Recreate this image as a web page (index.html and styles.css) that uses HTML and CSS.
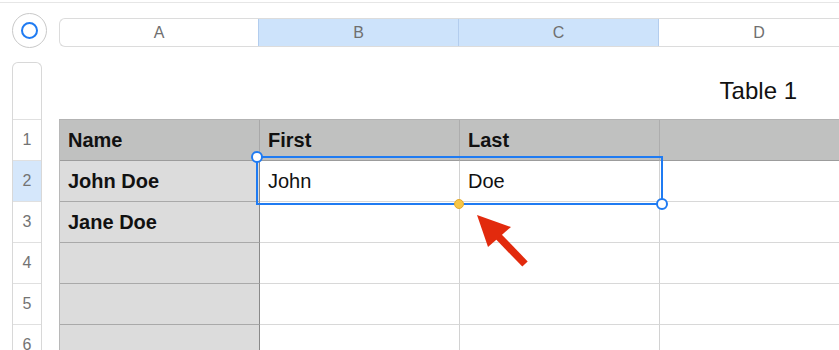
FILE: index.html
```html
<!DOCTYPE html>
<html>
<head>
<meta charset="utf-8">
<link rel="stylesheet" href="styles.css">
</head>
<body>
<div class="topline"></div>
<div class="colbar-row">
  <div class="selectall"><span class="ring"></span></div>
  <div class="colbar">
    <div class="col col-a">A</div>
    <div class="col sel">B</div>
    <div class="col sel">C</div>
    <div class="col col-d">D</div>
  </div>
</div>
<div class="sheet">
  <div class="rowbar">
    <div class="rh-top"></div>
    <div class="rh">1</div>
    <div class="rh rh-sel">2</div>
    <div class="rh">3</div>
    <div class="rh">4</div>
    <div class="rh">5</div>
    <div class="rh">6</div>
  </div>
  <div class="tablearea">
    <div class="title">Table 1</div>
    <div class="table">
      <div class="cell hdr hdr-a">Name</div>
      <div class="cell hdr">First</div>
      <div class="cell hdr">Last</div>
      <div class="cell hdr last"></div>

      <div class="cell hc">John Doe</div>
      <div class="cell">John</div>
      <div class="cell">Doe</div>
      <div class="cell last"></div>

      <div class="cell hc">Jane Doe</div>
      <div class="cell"></div>
      <div class="cell"></div>
      <div class="cell last"></div>

      <div class="cell hc"></div>
      <div class="cell"></div>
      <div class="cell"></div>
      <div class="cell last"></div>

      <div class="cell hc"></div>
      <div class="cell"></div>
      <div class="cell"></div>
      <div class="cell last"></div>

      <div class="cell hc"></div>
      <div class="cell"></div>
      <div class="cell"></div>
      <div class="cell last"></div>

      <div class="selection"></div>
      <span class="handle handle-tl"></span>
      <span class="handle handle-br"></span>
      <span class="dot"></span>
      <svg class="arrow" width="80" height="70" viewBox="470 208 80 70">
        <line x1="496" y1="234" x2="525" y2="264" stroke="#e22a0d" stroke-width="7.5"/>
        <polygon points="477,215 511,227 488,247" fill="#e22a0d"/>
      </svg>
    </div>
  </div>
</div>
</body>
</html>
```

FILE: styles.css
```css
* { box-sizing: border-box; }
html, body {
  margin: 0;
  padding: 0;
  background: #ffffff;
  overflow: hidden;
  width: 839px;
  height: 350px;
  font-family: "Liberation Sans", Arial, Helvetica, sans-serif;
}
.topline {
  margin-top: 2px;
  height: 1px;
  background: #e6e6e6;
}
.colbar-row {
  display: flex;
  align-items: flex-start;
  padding-left: 12px;
}
.selectall {
  margin-top: 10px;
  width: 35px;
  height: 35px;
  border-radius: 50%;
  border: 1.5px solid #c9c9c9;
  display: flex;
  align-items: center;
  justify-content: center;
  flex: none;
}
.ring {
  width: 17px;
  height: 17px;
  border-radius: 50%;
  border: 2px solid #1f7bf2;
}
.colbar {
  margin-top: 15px;
  margin-left: 12px;
  height: 29px;
  flex: 1;
  min-width: 0;
  display: flex;
  border: 1px solid #dcdcdc;
  border-right: none;
  border-radius: 6px 0 0 6px;
  overflow: hidden;
}
.col {
  width: 200px;
  flex: none;
  display: flex;
  align-items: center;
  justify-content: center;
  font-size: 16px;
  color: #6f6f6f;
  border-right: 1px solid #e2e2e2;
}
.col-a { width: 199px; border-right: 1px solid #b3cdee; }
.col-d { border-right: none; }
.col.sel {
  background: #cde3fb;
  border-right: 1px solid #b3cdee;
}

.sheet {
  display: flex;
  margin-top: 14px;
  padding-left: 12px;
}
.rowbar {
  width: 30px;
  flex: none;
  border: 1px solid #d8d8d8;
  border-bottom: none;
  border-radius: 6px 6px 0 0;
  display: flex;
  flex-direction: column;
}
.rh-top {
  height: 57px;
  flex: none;
  border-bottom: 1px solid #e0e0e0;
}
.rh {
  height: 41px;
  border-bottom: 1px solid #e0e0e0;
  display: flex;
  align-items: center;
  justify-content: center;
  font-size: 16px;
  color: #737373;
  flex: none;
}
.rh-sel { background: #d5e7fb; }

.tablearea {
  margin-left: 17px;
  flex: 1;
  min-width: 0;
}
.title {
  height: 57px;
  display: flex;
  align-items: center;
  justify-content: flex-end;
  padding-right: 42px;
  font-size: 24px;
  color: #111;
}
.table {
  position: relative;
  display: grid;
  grid-template-columns: 200px 200px 200px 200px;
  grid-auto-rows: 41px;
  border-top: 1px solid #b3b3b3;
  border-left: 1px solid #b8b8b8;
}
.cell {
  border-right: 1px solid #d2d2d2;
  border-bottom: 1px solid #d8d8d8;
  display: flex;
  align-items: center;
  padding-left: 8px;
  font-size: 20px;
  color: #111;
}
.cell.last { border-right: none; }
.hdr {
  background: #c0c1c0;
  font-weight: bold;
  border-bottom: 1px solid #9c9c9c;
  border-right: 1px solid #adadad;
}
.hdr.hdr-a { border-right: 1px solid #a8a8a8; }
.hc {
  background: #dcdcdc;
  font-weight: bold;
  border-bottom: 1px solid #a9a9a9;
  border-right: 1px solid #8a8a8a;
}

.selection {
  position: absolute;
  left: 196px;
  top: 36px;
  width: 407px;
  height: 49px;
  border: 2px solid #1f7bf2;
}
.handle {
  position: absolute;
  width: 12px;
  height: 12px;
  border-radius: 50%;
  background: #fff;
  border: 2px solid #1f7bf2;
}
.handle-tl { left: 191px; top: 31px; }
.handle-br { left: 596px; top: 78px; }
.dot {
  position: absolute;
  left: 394px;
  top: 79px;
  width: 10px;
  height: 10px;
  border-radius: 50%;
  background: #f7c646;
  border: 1px solid #e3aa2c;
}
.arrow {
  position: absolute;
  left: 410px;
  top: 88px;
}
```
